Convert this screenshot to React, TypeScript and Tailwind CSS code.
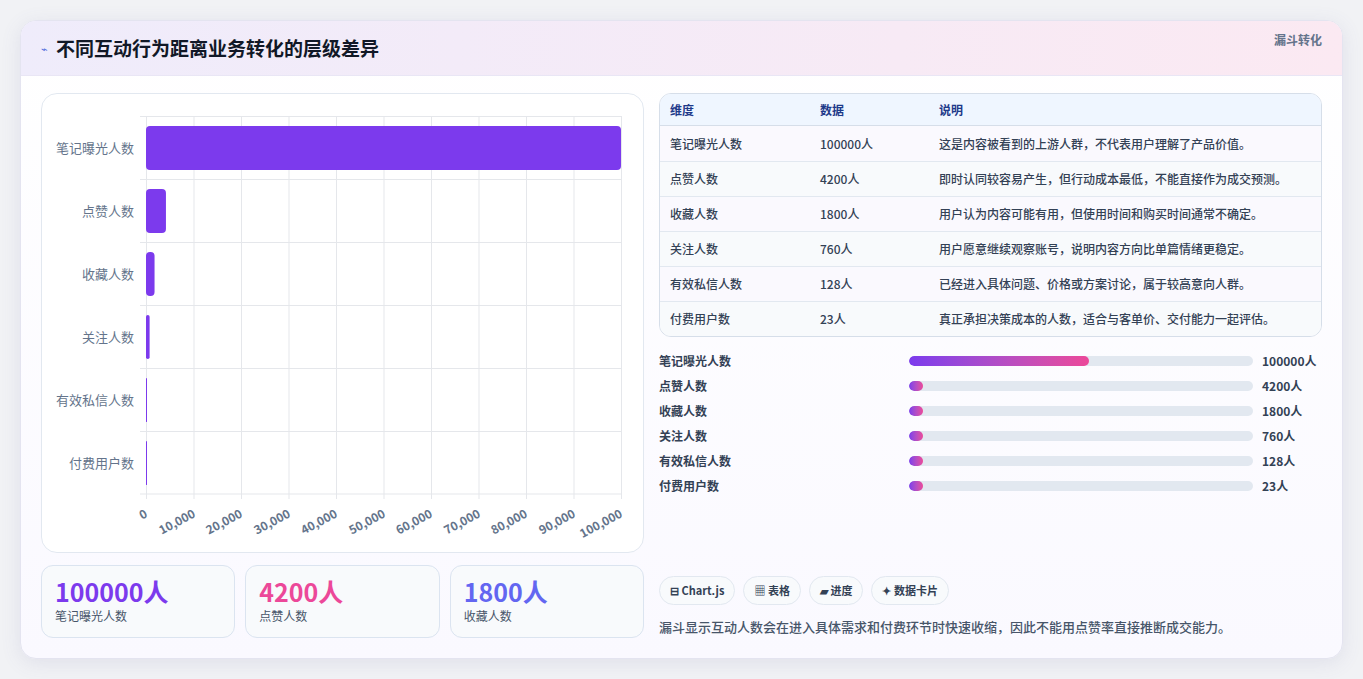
import React from "react";

const rows = [
  { k: "笔记曝光人数", v: 100000, d: "这是内容被看到的上游人群，不代表用户理解了产品价值。" },
  { k: "点赞人数", v: 4200, d: "即时认同较容易产生，但行动成本最低，不能直接作为成交预测。" },
  { k: "收藏人数", v: 1800, d: "用户认为内容可能有用，但使用时间和购买时间通常不确定。" },
  { k: "关注人数", v: 760, d: "用户愿意继续观察账号，说明内容方向比单篇情绪更稳定。" },
  { k: "有效私信人数", v: 128, d: "已经进入具体问题、价格或方案讨论，属于较高意向人群。" },
  { k: "付费用户数", v: 23, d: "真正承担决策成本的人数，适合与客单价、交付能力一起评估。" },
];
const ticks = ["0", "10,000", "20,000", "30,000", "40,000", "50,000", "60,000", "70,000", "80,000", "90,000", "100,000"];

function Chart() {
  const W = 475, H = 378;
  return (
    <div className="relative h-[460px] rounded-2xl border border-[#e2e8f0] bg-white">
      <div className="absolute left-[104px] top-[22px]" style={{ width: W, height: H }}>
        <svg width={W + 2} height={H + 6} className="absolute left-0 top-0 overflow-visible">
          {ticks.map((_, i) => (
            <line key={i} x1={i * 47.5 + 0.5} x2={i * 47.5 + 0.5} y1={0} y2={H + 5} stroke="#e5e7eb" />
          ))}
          {rows.map((_, i) => (
            <line key={i} x1={-6} x2={W} y1={i * 63 + 0.5} y2={i * 63 + 0.5} stroke="#e5e7eb" />
          ))}
          <line x1={-6} x2={W} y1={H} y2={H} stroke="#e5e7eb" />
          {rows.map((r, i) => {
            const w = Math.max((r.v / 100000) * W, 1);
            return <rect key={i} x={0} y={i * 63 + 10} width={w} height={44} rx={Math.min(4, w / 2)} fill="#7c3aed" />;
          })}
        </svg>
        {rows.map((r, i) => (
          <div key={i} className="absolute right-[487px] whitespace-nowrap text-[13px] text-[#64748b]" style={{ top: i * 63 + 22 }}>
            {r.k}
          </div>
        ))}
        {ticks.map((t, i) => (
          <div key={i} className="absolute whitespace-nowrap text-[12px] font-bold text-[#64748b]" style={{ top: H + 18, left: i * 47.5, transform: "translate(-100%,-50%) rotate(-28deg)", transformOrigin: "right center" }}>
            {t}
          </div>
        ))}
      </div>
    </div>
  );
}

export default function App() {
  const font = { fontFamily: '"Noto Sans CJK SC", "Noto Sans", sans-serif' };
  return (
    <div className="min-h-[679px] bg-[#f1f2f5] p-5 pb-[21px]" style={font}>
      <div className="overflow-hidden rounded-2xl border border-[#e4e4f0] bg-gradient-to-b from-white to-[#faf9ff] shadow-[0_4px_20px_rgba(100,100,160,0.12)]">
        <div className="flex h-[55px] items-center justify-between border-b border-[#e9e6f5] bg-gradient-to-r from-[#efecfb] to-[#fbe9f2] px-5">
          <div className="flex items-center gap-2">
            <span className="text-[11px] text-[#4f6bdc]">⌁</span>
            <span className="text-[19px] font-bold text-[#111827]">不同互动行为距离业务转化的层级差异</span>
          </div>
          <span className="-mt-4 text-[12px] font-bold text-[#64748b]">漏斗转化</span>
        </div>
        <div className="flex gap-[15px] p-5 pt-[17px]">
          <div className="flex w-[603px] flex-col gap-3">
            <Chart />
            <div className="grid grid-cols-3 gap-[10px]">
              {[
                ["100000人", "笔记曝光人数", "text-[#7c3aed]"],
                ["4200人", "点赞人数", "text-[#ec4899]"],
                ["1800人", "收藏人数", "text-[#6366f1]"],
              ].map(([a, b, c]) => (
                <div key={b} className="h-[73px] rounded-xl border border-[#dbe4f0] bg-[#f8fafc] px-[13px] pt-[9px]">
                  <div className={`text-[25px] font-bold leading-[32px] ${c}`}>{a}</div>
                  <div className="text-[12px] text-[#475569]">{b}</div>
                </div>
              ))}
            </div>
          </div>
          <div className="flex flex-1 flex-col">
            <div className="overflow-hidden rounded-xl border border-[#d6dee9]">
              <div className="flex h-[32px] items-center border-b border-[#d6dee9] bg-[#eff6ff] text-[12px] font-bold text-[#1e3a8a]">
                <div className="w-[160px] pl-[10px]">维度</div>
                <div className="w-[119px]">数据</div>
                <div>说明</div>
              </div>
              {rows.map((r, i) => (
                <div key={r.k} className={`flex h-[35px] items-center text-[12px] font-medium text-[#334155] ${i ? "border-t border-[#e2e8f0]" : ""} ${i % 2 ? "bg-[#f8fafc]" : "bg-[#faf9fe]"}`}>
                  <div className="w-[160px] pl-[10px]">{r.k}</div>
                  <div className="w-[119px]">{r.v}人</div>
                  <div>{r.d}</div>
                </div>
              ))}
            </div>
            <div className="mt-[11px] flex flex-col">
              {rows.map((r) => (
                <div key={r.k} className="flex h-[25px] items-center text-[12px] font-bold text-[#334155]">
                  <div className="w-[250px]">{r.k}</div>
                  <div className="h-[10px] w-[344px] overflow-hidden rounded-full bg-[#e2e8f0]">
                    <div className="h-full rounded-full bg-gradient-to-r from-[#7c3aed] to-[#ec4899]" style={{ width: Math.max((r.v / 100000) * 180, 14) }} />
                  </div>
                  <div className="ml-[9px]">{r.v}人</div>
                </div>
              ))}
            </div>
            <div className="mt-auto flex gap-2">
              {["⊟ Chart.js", "▦ 表格", "▰ 进度", "✦ 数据卡片"].map((t) => (
                <span key={t} className="rounded-full border border-[#e2e8f0] bg-[#f8fafc] px-[10px] py-[5px] text-[11px] font-bold text-[#334155]">{t}</span>
              ))}
            </div>
            <div className="mb-[2px] mt-[12px] text-[13px] font-medium text-[#475569]">漏斗显示互动人数会在进入具体需求和付费环节时快速收缩，因此不能用点赞率直接推断成交能力。</div>
          </div>
        </div>
      </div>
    </div>
  );
}
